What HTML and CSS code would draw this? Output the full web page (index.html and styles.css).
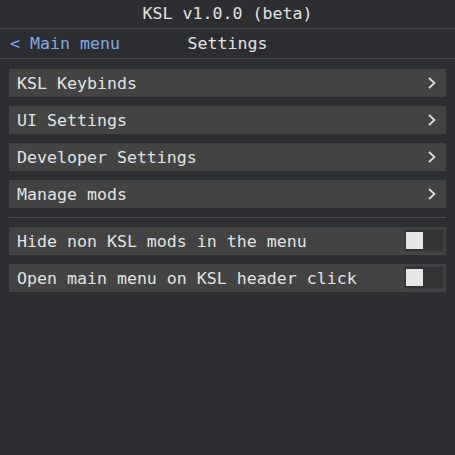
FILE: index.html
```html
<!DOCTYPE html>
<html>
<head>
<meta charset="utf-8">
<link rel="stylesheet" href="styles.css">
</head>
<body>
<div class="titlebar">KSL v1.0.0 (beta)</div>
<div class="nav">
  <span class="back">&lt; Main menu</span>
  <span class="nav-title">Settings</span>
  <span></span>
</div>
<div class="list">
  <div class="row"><span>KSL Keybinds</span><svg class="chev" width="8" height="12" viewBox="0 0 8 12"><polyline points="1,1 6.5,6 1,11" fill="none" stroke="#e0e0e0" stroke-width="1.7"/></svg></div>
  <div class="row"><span>UI Settings</span><svg class="chev" width="8" height="12" viewBox="0 0 8 12"><polyline points="1,1 6.5,6 1,11" fill="none" stroke="#e0e0e0" stroke-width="1.7"/></svg></div>
  <div class="row"><span>Developer Settings</span><svg class="chev" width="8" height="12" viewBox="0 0 8 12"><polyline points="1,1 6.5,6 1,11" fill="none" stroke="#e0e0e0" stroke-width="1.7"/></svg></div>
  <div class="row"><span>Manage mods</span><svg class="chev" width="8" height="12" viewBox="0 0 8 12"><polyline points="1,1 6.5,6 1,11" fill="none" stroke="#e0e0e0" stroke-width="1.7"/></svg></div>
  <div class="sep"></div>
  <div class="row toggle-row"><span>Hide non KSL mods in the menu</span><span class="toggle"><span class="knob"></span></span></div>
  <div class="row toggle-row"><span>Open main menu on KSL header click</span><span class="toggle"><span class="knob"></span></span></div>
</div>
</body>
</html>
```
FILE: styles.css
```css
html, body {
  margin: 0;
  padding: 0;
  background: #2d2e31;
  color: #e2e2e2;
  font-family: "DejaVu Sans Mono", "Liberation Mono", monospace;
  font-size: 16.6px;
}
.titlebar {
  height: 28px;
  line-height: 28px;
  text-align: center;
  border-bottom: 1px solid #454649;
}
.nav {
  height: 29px;
  display: grid;
  grid-template-columns: 1fr auto 1fr;
  align-items: center;
  border-bottom: 1px solid #454649;
}
.back {
  color: #7ea9e6;
  padding-left: 10px;
}
.nav-title {
  color: #e2e2e2;
}
.list {
  padding: 10px 9px;
  display: flex;
  flex-direction: column;
  gap: 9px;
}
.row {
  height: 28px;
  background: #434343;
  display: flex;
  align-items: center;
  justify-content: space-between;
  padding: 0 10px 0 8px;
}
.chev {
  display: block;
}
.sep {
  height: 1px;
  background: #4a4a4c;
}
.toggle-row {
  padding-right: 2px;
}
.toggle {
  width: 37px;
  height: 21px;
  background: #333335;
  border: 1px solid #3d3d3f;
  margin-bottom: 1px;
  display: flex;
  align-items: center;
  padding-left: 1px;
  box-sizing: content-box;
}
.knob {
  width: 17px;
  height: 17px;
  background: #e6e6e6;
  display: block;
}
```
